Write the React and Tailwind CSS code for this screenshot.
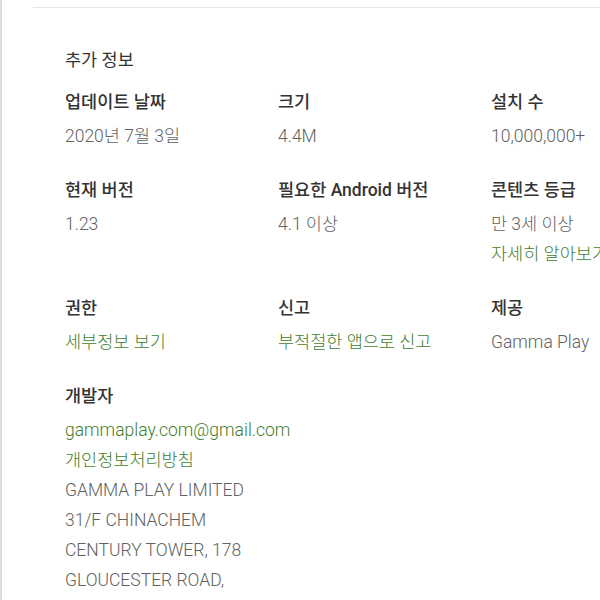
const font = { fontFamily: 'Roboto, "Noto Sans CJK KR", sans-serif' }

const rows = [
  [
    { label: '업데이트 날짜', values: [{ text: '2020년 7월 3일' }] },
    { label: '크기', values: [{ text: '4.4M' }] },
    { label: '설치 수', values: [{ text: '10,000,000+' }] },
  ],
  [
    { label: '현재 버전', values: [{ text: '1.23' }] },
    { label: '필요한 Android 버전', values: [{ text: '4.1 이상' }] },
    {
      label: '콘텐츠 등급',
      values: [{ text: '만 3세 이상' }, { text: '자세히 알아보기', link: true }],
    },
  ],
  [
    { label: '권한', values: [{ text: '세부정보 보기', link: true }] },
    { label: '신고', values: [{ text: '부적절한 앱으로 신고', link: true }] },
    { label: '제공', values: [{ text: 'Gamma Play' }] },
  ],
]

const developer = [
  { text: 'gammaplay.com@gmail.com', link: true },
  { text: '개인정보처리방침', link: true },
  { text: 'GAMMA PLAY LIMITED' },
  { text: '31/F CHINACHEM' },
  { text: 'CENTURY TOWER, 178' },
  { text: 'GLOUCESTER ROAD,' },
  { text: 'WANCHAI, HONG KONG' },
]

function Value({ text, link }) {
  return (
    <div
      className={`h-[30px] leading-[30px] text-[17.5px] font-light whitespace-nowrap ${
        link ? 'text-[#437d2c]' : 'text-[#616161]'
      }`}
    >
      {text}
    </div>
  )
}

function Label({ children }) {
  return (
    <div className="h-6 leading-[22px] text-[17.5px] font-medium text-[#333] whitespace-nowrap">{children}</div>
  )
}

function Cell({ label, values }) {
  return (
    <div className="w-[213px] shrink-0">
      <Label>{label}</Label>
      <div className="mt-1.5">
        {values.map((v) => (
          <Value key={v.text} {...v} />
        ))}
      </div>
    </div>
  )
}

export default function App() {
  return (
    <div className="w-[600px] h-[600px] overflow-hidden bg-white border-l-2 border-[#dcdcdc]" style={font}>
      <div className="pt-[7px] pl-[31px]">
        <div className="h-px bg-[#e6e6e6] w-[700px]" />
        <div className="pl-8 pt-[41px] w-[800px]">
          <h2 className="h-6 leading-[22px] text-[17.5px] text-[#333] font-normal">추가 정보</h2>
          <div className="mt-[18px] space-y-[28px]">
            {rows.map((row, i) => (
              <div key={i} className="flex">
                {row.map((c) => (
                  <Cell key={c.label} {...c} />
                ))}
              </div>
            ))}
            <div>
              <Label>개발자</Label>
              <div className="mt-1.5">
                {developer.map((v) => (
                  <Value key={v.text} {...v} />
                ))}
              </div>
            </div>
          </div>
        </div>
      </div>
    </div>
  )
}
